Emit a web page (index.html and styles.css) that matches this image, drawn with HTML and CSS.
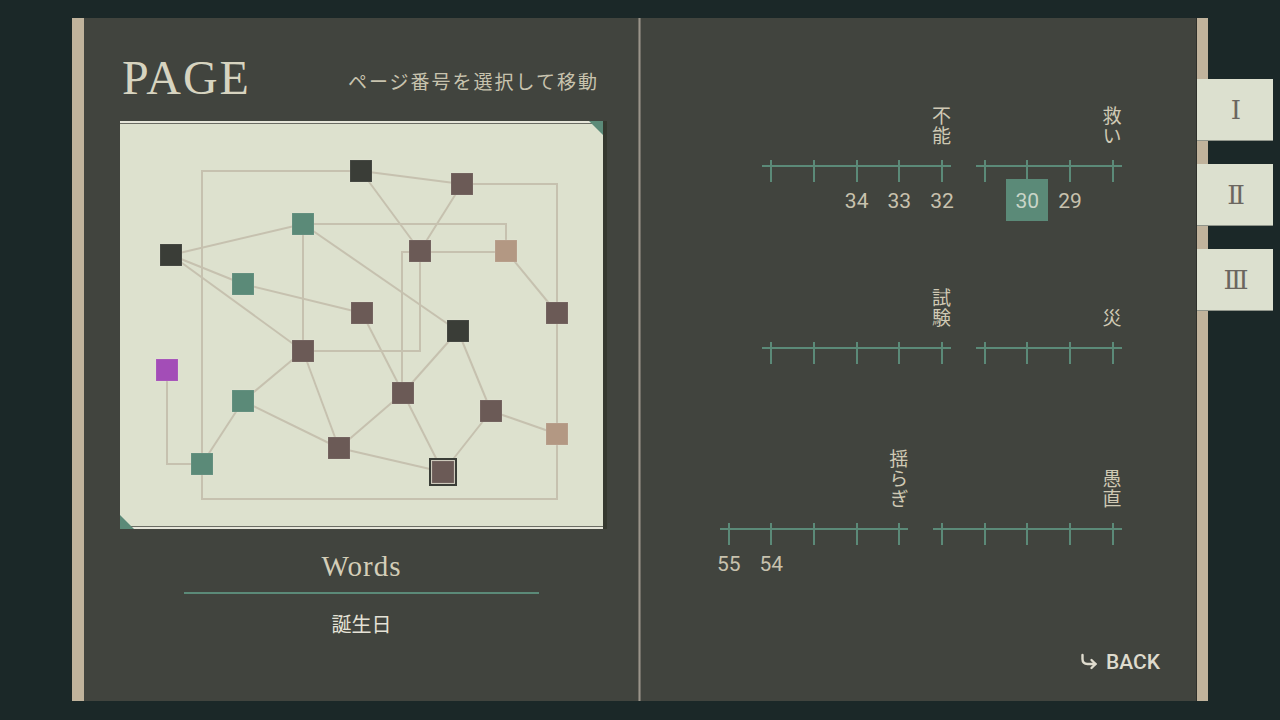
FILE: index.html
```html
<!DOCTYPE html>
<html lang="ja">
<head>
    <meta charset="UTF-8">
    <meta name="viewport" content="width=device-width, initial-scale=1.0">
    <title>PAGE</title>
    <link rel="stylesheet" href="styles.css">
</head>
<body>
    <div class="screen">
        <div class="book">
            <div class="edge"></div>

            <div class="page page-left">
                <div class="page-head">
                    <h1 class="page-title">PAGE</h1>
                    <span class="page-hint">ページ番号を選択して移動</span>
                </div>

                <div class="map">
                    <svg class="map-svg" width="483" height="404" viewBox="120 123 483 404">
                        <g stroke="#c6c1af" stroke-width="2" fill="none">
                            <polyline points="361,171 202,171 202,499 557,499 557,434"/>
                            <polyline points="462,184 557,184 557,313"/>
                            <polyline points="303,224 506,224 506,251"/>
                            <polyline points="402,393 402,252 506,252"/>
                            <polyline points="303,351 420,351 420,251"/>
                            <polyline points="167,370 167,464 202,464"/>
                            <line x1="361" y1="171" x2="462" y2="184"/>
                            <line x1="361" y1="171" x2="420" y2="251"/>
                            <line x1="462" y1="184" x2="420" y2="251"/>
                            <line x1="303" y1="224" x2="303" y2="351"/>
                            <line x1="303" y1="224" x2="458" y2="331"/>
                            <line x1="171" y1="255" x2="303" y2="224"/>
                            <line x1="171" y1="255" x2="243" y2="284"/>
                            <line x1="171" y1="255" x2="303" y2="351"/>
                            <line x1="243" y1="284" x2="362" y2="313"/>
                            <line x1="506" y1="251" x2="557" y2="313"/>
                            <line x1="557" y1="313" x2="557" y2="434"/>
                            <line x1="202" y1="464" x2="243" y2="401"/>
                            <line x1="243" y1="401" x2="303" y2="351"/>
                            <line x1="243" y1="401" x2="339" y2="448"/>
                            <line x1="303" y1="351" x2="339" y2="448"/>
                            <line x1="362" y1="313" x2="403" y2="393"/>
                            <line x1="458" y1="331" x2="403" y2="393"/>
                            <line x1="458" y1="331" x2="491" y2="411"/>
                            <line x1="491" y1="411" x2="557" y2="434"/>
                            <line x1="491" y1="411" x2="443" y2="472"/>
                            <line x1="403" y1="393" x2="443" y2="472"/>
                            <line x1="403" y1="393" x2="339" y2="448"/>
                            <line x1="339" y1="448" x2="443" y2="472"/>
                        </g>
                        <g>
                            <rect class="node dark" x="350" y="160" width="22" height="22"/>
                            <rect class="node brown" x="451" y="173" width="22" height="22"/>
                            <rect class="node teal" x="292" y="213" width="22" height="22"/>
                            <rect class="node dark" x="160" y="244" width="22" height="22"/>
                            <rect class="node brown" x="409" y="240" width="22" height="22"/>
                            <rect class="node tan" x="495" y="240" width="22" height="22"/>
                            <rect class="node teal" x="232" y="273" width="22" height="22"/>
                            <rect class="node brown" x="351" y="302" width="22" height="22"/>
                            <rect class="node brown" x="546" y="302" width="22" height="22"/>
                            <rect class="node dark" x="447" y="320" width="22" height="22"/>
                            <rect class="node brown" x="292" y="340" width="22" height="22"/>
                            <rect class="node purple" x="156" y="359" width="22" height="22"/>
                            <rect class="node teal" x="232" y="390" width="22" height="22"/>
                            <rect class="node brown" x="392" y="382" width="22" height="22"/>
                            <rect class="node brown" x="480" y="400" width="22" height="22"/>
                            <rect class="node tan" x="546" y="423" width="22" height="22"/>
                            <rect class="node brown" x="328" y="437" width="22" height="22"/>
                            <rect class="node teal" x="191" y="453" width="22" height="22"/>
                            <rect class="node-ring" x="430" y="459" width="26" height="26"/>
                            <rect class="node brown" x="432" y="461" width="22" height="22"/>
                        </g>
                    </svg>
                </div>

                <div class="words">
                    <div class="words-title">Words</div>
                    <div class="words-text">誕生日</div>
                </div>
            </div>

            <div class="spine"></div>

            <div class="page page-right">
                <div class="timeline">
                    <div class="row">
                        <div class="seg">
                            <div class="vlabel">不能</div>
                            <div class="ticks">
                                <div class="tick"><div class="mark"></div><div class="num"></div></div>
                                <div class="tick"><div class="mark"></div><div class="num"></div></div>
                                <div class="tick"><div class="mark"></div><div class="num">34</div></div>
                                <div class="tick"><div class="mark"></div><div class="num">33</div></div>
                                <div class="tick"><div class="mark"></div><div class="num">32</div></div>
                            </div>
                        </div>
                        <div class="seg">
                            <div class="vlabel">救い</div>
                            <div class="ticks">
                                <div class="tick"><div class="mark"></div><div class="num"></div></div>
                                <div class="tick"><div class="mark"></div><div class="num selected">30</div></div>
                                <div class="tick"><div class="mark"></div><div class="num">29</div></div>
                                <div class="tick"><div class="mark"></div><div class="num"></div></div>
                            </div>
                        </div>
                    </div>

                    <div class="row">
                        <div class="seg">
                            <div class="vlabel">試験</div>
                            <div class="ticks">
                                <div class="tick"><div class="mark"></div><div class="num"></div></div>
                                <div class="tick"><div class="mark"></div><div class="num"></div></div>
                                <div class="tick"><div class="mark"></div><div class="num"></div></div>
                                <div class="tick"><div class="mark"></div><div class="num"></div></div>
                                <div class="tick"><div class="mark"></div><div class="num"></div></div>
                            </div>
                        </div>
                        <div class="seg">
                            <div class="vlabel">災</div>
                            <div class="ticks">
                                <div class="tick"><div class="mark"></div><div class="num"></div></div>
                                <div class="tick"><div class="mark"></div><div class="num"></div></div>
                                <div class="tick"><div class="mark"></div><div class="num"></div></div>
                                <div class="tick"><div class="mark"></div><div class="num"></div></div>
                            </div>
                        </div>
                    </div>

                    <div class="row">
                        <div class="seg">
                            <div class="vlabel">揺らぎ</div>
                            <div class="ticks">
                                <div class="tick"><div class="mark"></div><div class="num">55</div></div>
                                <div class="tick"><div class="mark"></div><div class="num">54</div></div>
                                <div class="tick"><div class="mark"></div><div class="num"></div></div>
                                <div class="tick"><div class="mark"></div><div class="num"></div></div>
                                <div class="tick"><div class="mark"></div><div class="num"></div></div>
                            </div>
                        </div>
                        <div class="seg">
                            <div class="vlabel">愚直</div>
                            <div class="ticks">
                                <div class="tick"><div class="mark"></div><div class="num"></div></div>
                                <div class="tick"><div class="mark"></div><div class="num"></div></div>
                                <div class="tick"><div class="mark"></div><div class="num"></div></div>
                                <div class="tick"><div class="mark"></div><div class="num"></div></div>
                                <div class="tick"><div class="mark"></div><div class="num"></div></div>
                            </div>
                        </div>
                    </div>
                </div>

                <div class="back">
                    <svg class="back-icon" width="18" height="18" viewBox="0 0 18 18">
                        <path d="M2.5 2 V6 Q2.5 11 7.5 11 H15.5" fill="none" stroke="#dedbcd" stroke-width="2.4" stroke-linecap="round"/>
                        <path d="M11.5 7 L15.5 11 L11.5 15" fill="none" stroke="#dedbcd" stroke-width="2.4" stroke-linecap="round" stroke-linejoin="round"/>
                    </svg>
                    <span>BACK</span>
                </div>
            </div>

            <div class="edge edge-right"></div>
        </div>

        <div class="tabs">
            <div class="tab">Ⅰ</div>
            <div class="tab">Ⅱ</div>
            <div class="tab">Ⅲ</div>
        </div>
    </div>
</body>
</html>
```

FILE: styles.css
```css
body {
    margin: 0;
    background-color: #1b2828;
    font-family: 'Noto Sans CJK JP', 'Noto Sans', sans-serif;
    color: #c8c2ae;
}
.screen {
    display: flex;
    align-items: flex-start;
    width: 1280px;
    height: 720px;
    padding: 18px 0 0 72px;
    box-sizing: border-box;
    overflow: hidden;
}
.book {
    display: flex;
    height: 683px;
}
.edge {
    width: 12px;
    background-color: #c0b39c;
}
.edge-right {
    box-shadow: inset 1px 0 0 #2e302b;
}
.page {
    background-color: #41443e;
    box-sizing: border-box;
}
.spine {
    width: 3px;
    background: linear-gradient(to right, #5e5d56, #9a958a, #5e5d56);
}

/* left page */
.page-left {
    width: 554px;
    padding: 36px 35px 0 36px;
}
.page-head {
    display: flex;
    justify-content: space-between;
    align-items: flex-start;
    height: 48px;
    padding: 0 4px 0 2px;
}
.page-title {
    margin: 0;
    font-family: 'Liberation Serif', serif;
    font-weight: normal;
    font-size: 48px;
    line-height: 48px;
    letter-spacing: 2px;
    color: #d7d4c0;
}
.page-hint {
    margin-top: 17px;
    font-size: 19px;
    line-height: 19px;
    letter-spacing: 2px;
    color: #c8c3ae;
}
.map {
    position: relative;
    width: 483px;
    height: 408px;
    margin-top: 19px;
    box-sizing: border-box;
    background-color: #dde1ce;
    border-top: 2px solid #e6e6da;
    border-bottom: 2px solid #e6e6da;
    box-shadow: inset 0 1px 0 #6a6c63, inset 0 -1px 0 #6a6c63, 4px 0 0 #35382f;
}
.map::before,
.map::after {
    content: '';
    position: absolute;
    width: 0;
    height: 0;
    border-style: solid;
}
.map::before {
    top: -2px;
    right: 0;
    border-width: 0 14px 14px 0;
    border-color: transparent #5b8a78 transparent transparent;
}
.map::after {
    bottom: -2px;
    left: 0;
    border-width: 14px 0 0 14px;
    border-color: transparent transparent transparent #5b8a78;
}
.map-svg {
    display: block;
}
.node {
    stroke: rgba(255, 255, 255, 0.12);
    stroke-width: 1;
}
.node.dark { fill: #3a3d37; }
.node.brown { fill: #6b5a56; }
.node.teal { fill: #5b8a78; }
.node.tan { fill: #b39883; }
.node.purple { fill: #a34db7; }
.node-ring {
    fill: #cac6b7;
    stroke: #3a3d37;
    stroke-width: 2;
}
.words-title {
    width: 355px;
    margin: 19px auto 0;
    padding-bottom: 8px;
    border-bottom: 2px solid #5b8a78;
    text-align: center;
    font-family: 'Liberation Serif', serif;
    font-size: 29px;
    line-height: 36px;
    letter-spacing: 1px;
    color: #d4ceb8;
}
.words-text {
    margin-top: 16px;
    text-align: center;
    font-size: 20px;
    line-height: 28px;
    color: #e4e2d6;
}

/* right page */
.page-right {
    display: flex;
    flex-direction: column;
    width: 555px;
    padding: 21.5px 36px 27px 0;
}
.timeline {
    padding-right: 38.4px;
}
.row {
    display: flex;
    justify-content: flex-end;
    align-items: flex-end;
    gap: 24.67px;
    height: 181.5px;
}
.seg {
    display: flex;
    flex-direction: column;
}
.vlabel {
    align-self: flex-end;
    writing-mode: vertical-rl;
    margin-bottom: 14px;
    font-size: 19px;
    line-height: 19px;
    letter-spacing: 1px;
    color: #cfc9b4;
}
.ticks {
    display: flex;
    gap: 40.67px;
    padding: 0 8px;
    background: linear-gradient(#5b8a78, #5b8a78) 0 5px / 100% 2px no-repeat;
}
.tick {
    display: flex;
    flex-direction: column;
    width: 2px;
}
.mark {
    width: 2px;
    height: 22px;
    background-color: #5b8a78;
}
.num {
    width: 42px;
    height: 42px;
    margin: -3px 0 0 -20px;
    overflow: hidden;
    text-align: center;
    font-family: Roboto, sans-serif;
    font-size: 21px;
    line-height: 45px;
    color: #c8c2ae;
}
.num.selected {
    background-color: #5b8a78;
    color: #c9d5c8;
}
.back {
    margin-top: auto;
    align-self: flex-end;
    display: flex;
    align-items: center;
    gap: 8px;
    font-family: Roboto, sans-serif;
    font-weight: 500;
    font-size: 21px;
    line-height: 24px;
    color: #dedbcd;
}
.back-icon {
    display: block;
}

/* side tabs */
.tabs {
    display: flex;
    flex-direction: column;
    gap: 24px;
    margin: 61px 0 0 -11px;
}
.tab {
    display: flex;
    justify-content: center;
    align-items: center;
    width: 76px;
    height: 61px;
    padding-left: 2px;
    box-sizing: border-box;
    background-color: #dce0cf;
    box-shadow: 0 1px 0 #8f948a;
    font-family: 'DejaVu Serif', 'Liberation Serif', serif;
    font-size: 26px;
    color: #6b6660;
}
```
